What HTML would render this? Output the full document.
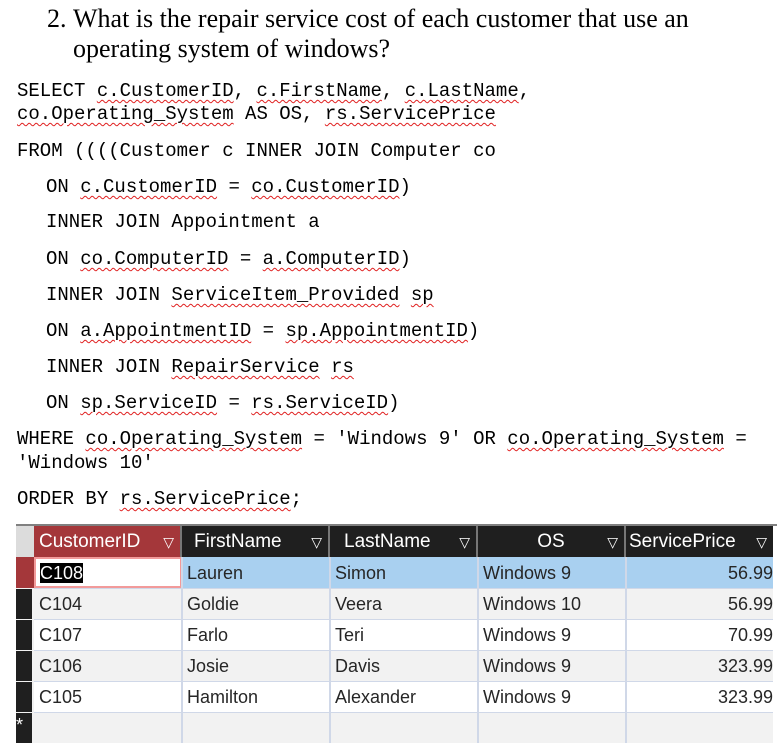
<!DOCTYPE html>
<html><head><meta charset="utf-8"><style>
body{margin:0;width:777px;height:741px;background:#fff;position:relative;overflow:hidden}
.t{position:absolute;font-family:"Liberation Serif",serif;font-size:26px;color:#000;white-space:nowrap}
.m{position:absolute;font-family:"Liberation Mono",monospace;font-size:19px;color:#000;white-space:nowrap}
.w{text-decoration:underline wavy #e02020;text-decoration-thickness:1px;text-underline-offset:3px}
#tb{position:absolute;left:16px;top:524px;width:761px;height:217px;background:#f2f2f2;border-top:2px solid #808080}
.c{position:absolute;font-family:"Liberation Sans",sans-serif;font-size:18px;box-sizing:border-box;padding-left:5px;line-height:33px;white-space:nowrap;color:#262626}
.h{background:#1f1f1f;color:#fff;height:31px;line-height:31px;border-right:2px solid #777;font-size:19px}
.tri{font-size:14px;position:absolute;right:6px;top:1px}
</style></head><body>
<div class="t" style="left:47px;top:4px">2.</div>
<div class="t" style="left:73px;top:4px">What is the repair service cost of each customer that use an</div>
<div class="t" style="left:73px;top:34px">operating system of windows?</div>

<div class="m" style="left:17px;top:80px">SELECT <span class="w">c.CustomerID</span>, <span class="w">c.FirstName</span>, <span class="w">c.LastName</span>,</div>
<div class="m" style="left:17px;top:103px"><span class="w">co.Operating_System</span> AS OS, <span class="w">rs.ServicePrice</span></div>
<div class="m" style="left:17px;top:140px">FROM ((((Customer c INNER JOIN Computer co</div>
<div class="m" style="left:46px;top:176px">ON <span class="w">c.CustomerID</span> = <span class="w">co.CustomerID</span>)</div>
<div class="m" style="left:46px;top:211px">INNER JOIN Appointment a</div>
<div class="m" style="left:46px;top:248px">ON <span class="w">co.ComputerID</span> = <span class="w">a.ComputerID</span>)</div>
<div class="m" style="left:46px;top:284px">INNER JOIN <span class="w">ServiceItem_Provided</span> <span class="w">sp</span></div>
<div class="m" style="left:46px;top:320px">ON <span class="w">a.AppointmentID</span> = <span class="w">sp.AppointmentID</span>)</div>
<div class="m" style="left:46px;top:356px">INNER JOIN <span class="w">RepairService</span> <span class="w">rs</span></div>
<div class="m" style="left:46px;top:392px">ON <span class="w">sp.ServiceID</span> = <span class="w">rs.ServiceID</span>)</div>
<div class="m" style="left:17px;top:428px">WHERE <span class="w">co.Operating_System</span> = 'Windows 9' OR <span class="w">co.Operating_System</span> =</div>
<div class="m" style="left:17px;top:452px">'Windows 10'</div>
<div class="m" style="left:17px;top:488px">ORDER BY <span class="w">rs.ServicePrice</span>;</div>

<div id="tb">
<div style="position:absolute;left:0;top:0;width:18px;height:31px;background:#dcdcdc"></div>
<div class="c h" style="left:18px;top:0;width:148px;background:#a4373a">CustomerID<span class="tri">▽</span></div>
<div class="c h" style="left:166px;top:0;width:148px;padding-left:12px">FirstName<span class="tri">▽</span></div>
<div class="c h" style="left:314px;top:0;width:148px;padding-left:14px">LastName<span class="tri">▽</span></div>
<div class="c h" style="left:462px;top:0;width:148px;text-align:center;padding-left:0">OS<span class="tri">▽</span></div>
<div class="c h" style="left:610px;top:0;width:151px;padding-left:3px">ServicePrice<span class="tri" style="right:8px">▽</span></div>

<div style="position:absolute;left:0;top:31px;width:18px;height:31px;background:#a4373a"></div>
<div style="position:absolute;left:0;top:63px;width:16px;height:30px;background:#1f1f1f"></div>
<div style="position:absolute;left:0;top:94px;width:16px;height:30px;background:#1f1f1f"></div>
<div style="position:absolute;left:0;top:125px;width:16px;height:30px;background:#1f1f1f"></div>
<div style="position:absolute;left:0;top:156px;width:16px;height:30px;background:#1f1f1f"></div>
<div style="position:absolute;left:0;top:187px;width:16px;height:30px;background:#1f1f1f;color:#fff;font:18px 'Liberation Sans',sans-serif;line-height:24px">*</div>

<div class="c" style="left:18px;top:31px;width:148px;height:31px;background:#fff;border:2px solid #f29a9a;line-height:29px;padding-left:4px"><span style="background:#000;color:#fff">C108</span></div>
<div class="c" style="left:166px;top:31px;width:444px;height:31px;background:#a9d0f0"></div>
<div class="c" style="left:610px;top:31px;width:151px;height:31px;background:#a9d0f0"></div>
<div class="c" style="left:166px;top:31px">Lauren</div><div class="c" style="left:314px;top:31px">Simon</div><div class="c" style="left:462px;top:31px">Windows 9</div><div class="c" style="left:610px;top:31px;width:147px;text-align:right">56.99</div>

<div class="c" style="left:18px;top:62px;width:743px;height:31px;background:#f2f2f2;border-top:1px solid #d0d8e8"></div>
<div class="c" style="left:18px;top:62px">C104</div><div class="c" style="left:166px;top:62px">Goldie</div><div class="c" style="left:314px;top:62px">Veera</div><div class="c" style="left:462px;top:62px">Windows 10</div><div class="c" style="left:610px;top:62px;width:147px;text-align:right">56.99</div>

<div class="c" style="left:18px;top:93px;width:743px;height:31px;background:#fff;border-top:1px solid #d0d8e8"></div>
<div class="c" style="left:18px;top:93px">C107</div><div class="c" style="left:166px;top:93px">Farlo</div><div class="c" style="left:314px;top:93px">Teri</div><div class="c" style="left:462px;top:93px">Windows 9</div><div class="c" style="left:610px;top:93px;width:147px;text-align:right">70.99</div>

<div class="c" style="left:18px;top:124px;width:743px;height:31px;background:#f2f2f2;border-top:1px solid #d0d8e8"></div>
<div class="c" style="left:18px;top:124px">C106</div><div class="c" style="left:166px;top:124px">Josie</div><div class="c" style="left:314px;top:124px">Davis</div><div class="c" style="left:462px;top:124px">Windows 9</div><div class="c" style="left:610px;top:124px;width:147px;text-align:right">323.99</div>

<div class="c" style="left:18px;top:155px;width:743px;height:31px;background:#fff;border-top:1px solid #d0d8e8"></div>
<div class="c" style="left:18px;top:155px">C105</div><div class="c" style="left:166px;top:155px">Hamilton</div><div class="c" style="left:314px;top:155px">Alexander</div><div class="c" style="left:462px;top:155px">Windows 9</div><div class="c" style="left:610px;top:155px;width:147px;text-align:right">323.99</div>

<div class="c" style="left:18px;top:186px;width:743px;height:31px;background:#f2f2f2;border-top:1px solid #d0d8e8"></div>
<div style="position:absolute;left:165px;top:31px;width:2px;height:186px;background:#d0d8e8"></div>
<div style="position:absolute;left:313px;top:31px;width:2px;height:186px;background:#d0d8e8"></div>
<div style="position:absolute;left:461px;top:31px;width:2px;height:186px;background:#d0d8e8"></div>
<div style="position:absolute;left:609px;top:31px;width:2px;height:186px;background:#d0d8e8"></div>
<div style="position:absolute;left:757px;top:0;width:4px;height:217px;background:#fff"></div>
</div>
</body></html>
